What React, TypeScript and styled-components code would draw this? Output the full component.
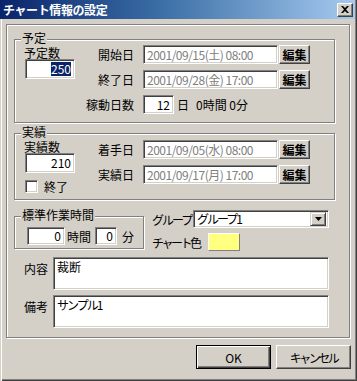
import React from 'react';
import styled, { createGlobalStyle } from 'styled-components';

// classic win2k palette
const FACE = '#d4d0c8';
const SHADOW = '#808080';
const DARK = '#404040';
const HILITE = '#ffffff';

const GlobalStyle = createGlobalStyle`
  html, body {
    margin: 0;
    padding: 0;
    background: ${FACE};
  }
  body {
    font-family: "MS UI Gothic", "Noto Sans CJK JP", sans-serif;
    font-size: 12px;
    color: #000;
  }
`;

const Window = styled.div`
  width: 357px;
  height: 381px;
  box-sizing: border-box;
  background: ${FACE};
  box-shadow: inset 1px 0 0 ${FACE}, inset 2px 0 0 ${HILITE}, inset -1px -1px 0 ${DARK},
    inset -2px -2px 0 ${SHADOW};
  display: flex;
  flex-direction: column;
  overflow: hidden;
`;

const TitleBar = styled.div`
  height: 19px;
  margin-right: 2px;
  padding: 0 2px 0 3px;
  display: flex;
  align-items: center;
  background: linear-gradient(90deg, #0a246a 0%, #3a6ea5 45%, #a6caf0 100%);
`;

const Title = styled.span`
  flex: 1;
  color: #fff;
  font-weight: bold;
  font-size: 12px;
  line-height: 19px;
  letter-spacing: -0.4px;
`;

const CloseButton = styled.div`
  width: 16px;
  height: 14px;
  box-sizing: border-box;
  background: ${FACE};
  border: 1px solid;
  border-color: ${HILITE} ${DARK} ${DARK} ${HILITE};
  box-shadow: inset -1px -1px 0 ${SHADOW};
  display: flex;
  align-items: center;
  justify-content: center;
`;

const Body = styled.div`
  padding: 5px 0 0 6px;
  display: flex;
  flex-direction: column;
`;

// the big etched frame round everything
const Frame = styled.div`
  width: 344px;
  height: 314px;
  box-sizing: border-box;
  border: 1px solid ${SHADOW};
  box-shadow: inset 1px 1px 0 ${HILITE}, 1px 1px 0 ${HILITE};
  padding: 14px 14px 0 7px;
  display: flex;
  flex-direction: column;
`;

const GroupBox = styled.div<{ $height: number; $width?: number; $top?: number; $padTop: number }>`
  position: relative;
  box-sizing: border-box;
  width: ${({ $width }) => ($width ? `${$width}px` : '100%')};
  height: ${({ $height }) => $height}px;
  margin-top: ${({ $top }) => $top ?? 0}px;
  border: 1px solid ${SHADOW};
  box-shadow: inset 1px 1px 0 ${HILITE}, 1px 1px 0 ${HILITE};
  padding-top: ${({ $padTop }) => $padTop}px;
  display: flex;
  flex-shrink: 0;
`;

const Caption = styled.span`
  position: absolute;
  top: -9px;
  left: 6px;
  padding: 0 1px;
  background: ${FACE};
  line-height: 13px;
  height: 13px;
  font-size: 12px;
`;

const LeftCol = styled.div`
  width: 71px;
  padding-left: 10px;
  box-sizing: border-box;
  display: flex;
  flex-direction: column;
  align-items: flex-start;
`;

const ColLabel = styled.div<{ $top: number }>`
  margin-top: ${({ $top }) => $top}px;
  margin-left: -1px;
  line-height: 12px;
  height: 12px;
  white-space: nowrap;
`;

const RightCol = styled.div<{ $gap: number }>`
  display: flex;
  flex-direction: column;
  gap: ${({ $gap }) => $gap}px;
`;

const Row = styled.div<{ $height: number }>`
  height: ${({ $height }) => $height}px;
  display: flex;
  align-items: center;
`;

const RowLabel = styled.span`
  width: 48px;
  margin-right: 9px;
  text-align: right;
  white-space: nowrap;
`;

const Field = styled.div<{ $w: number; $h: number; $align?: 'left' | 'right'; $muted?: boolean }>`
  width: ${({ $w }) => $w}px;
  height: ${({ $h }) => $h}px;
  box-sizing: border-box;
  flex-shrink: 0;
  background: #fff;
  border: 1px solid;
  border-color: ${SHADOW} ${HILITE} ${HILITE} ${SHADOW};
  box-shadow: inset 1px 1px 0 ${DARK}, inset -1px -1px 0 ${FACE};
  padding: 0 3px 0 3px;
  display: flex;
  align-items: center;
  justify-content: ${({ $align }) => ($align === 'right' ? 'flex-end' : 'flex-start')};
  color: ${({ $muted }) => ($muted ? '#808080' : '#000')};
  font-size: 12px;
  line-height: 12px;
  letter-spacing: ${({ $muted }) => ($muted ? '-0.5px' : '0')};
  white-space: nowrap;
  overflow: hidden;
`;

const MemoField = styled(Field)`
  align-items: flex-start;
  padding-top: 3px;
`;

// MS UI Gothic kana run narrower than Noto's
const Kana = styled.span<{ $spacing: number }>`
  letter-spacing: ${({ $spacing }) => $spacing}px;
  white-space: nowrap;
`;

const Selected = styled.span`
  background: #0a246a;
  color: #fff;
  padding: 1px 0;
`;

const EditButton = styled.button`
  width: 31px;
  height: 19px;
  margin-left: 1px;
  box-sizing: border-box;
  padding: 0;
  background: ${FACE};
  border: 1px solid;
  border-color: ${HILITE} ${DARK} ${DARK} ${HILITE};
  box-shadow: inset -1px -1px 0 ${SHADOW};
  font-family: inherit;
  font-size: 12px;
  font-weight: bold;
  color: #000;
  line-height: 12px;
`;

const Unit = styled.span<{ $left: number }>`
  margin-left: ${({ $left }) => $left}px;
  white-space: nowrap;
`;

const CheckRow = styled.div`
  margin-top: 5px;
  display: flex;
  align-items: center;
  gap: 6px;
`;

const CheckBox = styled.span`
  width: 13px;
  height: 13px;
  box-sizing: border-box;
  background: #fff;
  border: 1px solid;
  border-color: ${SHADOW} ${HILITE} ${HILITE} ${SHADOW};
  box-shadow: inset 1px 1px 0 ${DARK}, inset -1px -1px 0 ${FACE};
`;

const MiddleRow = styled.div`
  margin-top: 10px;
  height: 40px;
  display: flex;
  flex-shrink: 0;
`;

const StdInner = styled.div`
  padding: 10px 0 0 12px;
  display: flex;
  align-items: center;
  height: 18px;
`;

const SideCol = styled.div`
  margin-left: 8px;
  display: flex;
  flex-direction: column;
  gap: 5px;
`;

const SideRow = styled.div<{ $height: number }>`
  height: ${({ $height }) => $height}px;
  display: flex;
  align-items: center;
`;

const SideLabel = styled.span<{ $width: number }>`
  width: ${({ $width }) => $width}px;
  white-space: nowrap;
`;

const SelectBox = styled(Field)`
  padding-right: 2px;
  justify-content: space-between;
`;

const DropButton = styled.span`
  width: 16px;
  height: 14px;
  box-sizing: border-box;
  background: ${FACE};
  border: 1px solid;
  border-color: ${FACE} ${DARK} ${DARK} ${FACE};
  box-shadow: inset 1px 1px 0 ${HILITE}, inset -1px -1px 0 ${SHADOW};
  display: flex;
  align-items: center;
  justify-content: center;
`;

const Swatch = styled.span<{ $color: string }>`
  width: 32px;
  height: 18px;
  box-sizing: border-box;
  background: ${({ $color }) => $color};
  border: 1px solid;
  border-color: ${HILITE} ${SHADOW} ${SHADOW} ${HILITE};
`;

const MemoRow = styled.div<{ $top: number }>`
  margin-top: ${({ $top }) => $top}px;
  display: flex;
  align-items: flex-start;
  flex-shrink: 0;
`;

const MemoLabel = styled.span`
  width: 39px;
  padding: 3px 0 0 10px;
  box-sizing: border-box;
  white-space: nowrap;
`;

const Footer = styled.div`
  margin-top: 7px;
  padding-right: 6px;
  display: flex;
  justify-content: flex-end;
  gap: 5px;
`;

const DialogButton = styled.button<{ $default?: boolean }>`
  width: 75px;
  height: 24px;
  box-sizing: border-box;
  padding: 0;
  background: ${FACE};
  border: 1px solid;
  border-color: ${({ $default }) =>
    $default ? '#000' : `${HILITE} ${DARK} ${DARK} ${HILITE}`};
  box-shadow: ${({ $default }) =>
    $default
      ? `inset 1px 1px 0 ${HILITE}, inset -1px -1px 0 ${DARK}, inset -2px -2px 0 ${SHADOW}`
      : `inset -1px -1px 0 ${SHADOW}`};
  font-family: inherit;
  font-size: 12px;
  color: #000;
`;

const dates = {
  start: '2001/09/15(土) 08:00',
  end: '2001/09/28(金) 17:00',
  begun: '2001/09/05(水) 08:00',
  done: '2001/09/17(月) 17:00',
};

export default function App() {
  return (
    <>
      <GlobalStyle />
      <Window>
        <TitleBar>
          <Title>チャート情報の設定</Title>
          <CloseButton>
            <svg width="8" height="7" viewBox="0 0 8 7">
              <path d="M0 0h2l2 2 2-2h2L5 3.5 8 7H6L4 5 2 7H0l3-3.5z" fill="#000" />
            </svg>
          </CloseButton>
        </TitleBar>

        <Body>
          <Frame>
            <GroupBox $height={84} $padTop={5}>
              <Caption>予定</Caption>
              <LeftCol>
                <ColLabel $top={2}>予定数</ColLabel>
                <Field $w={50} $h={20} $align="right">
                  <Selected>250</Selected>
                </Field>
              </LeftCol>
              <RightCol $gap={6}>
                <Row $height={19}>
                  <RowLabel>開始日</RowLabel>
                  <Field $w={135} $h={19} $muted>{dates.start}</Field>
                  <EditButton>編集</EditButton>
                </Row>
                <Row $height={19}>
                  <RowLabel>終了日</RowLabel>
                  <Field $w={135} $h={19} $muted>{dates.end}</Field>
                  <EditButton>編集</EditButton>
                </Row>
                <Row $height={19}>
                  <RowLabel>稼動日数</RowLabel>
                  <Field $w={31} $h={19} $align="right">12</Field>
                  <Unit $left={3}>日</Unit>
                  <Unit $left={7}>0時間 0分</Unit>
                </Row>
              </RightCol>
            </GroupBox>

            <GroupBox $height={67} $top={10} $padTop={6}>
              <Caption>実績</Caption>
              <LeftCol>
                <ColLabel $top={1}>実績数</ColLabel>
                <Field $w={50} $h={20} $align="right">210</Field>
                <CheckRow>
                  <CheckBox />
                  <span>終了</span>
                </CheckRow>
              </LeftCol>
              <RightCol $gap={6}>
                <Row $height={19}>
                  <RowLabel>着手日</RowLabel>
                  <Field $w={135} $h={19} $muted>{dates.begun}</Field>
                  <EditButton>編集</EditButton>
                </Row>
                <Row $height={19}>
                  <RowLabel>実績日</RowLabel>
                  <Field $w={135} $h={19} $muted>{dates.done}</Field>
                  <EditButton>編集</EditButton>
                </Row>
              </RightCol>
            </GroupBox>

            <MiddleRow>
              <GroupBox $width={130} $height={33} $top={6} $padTop={0}>
                <Caption>標準作業時間</Caption>
                <StdInner>
                  <Field $w={38} $h={18} $align="right">0</Field>
                  <Unit $left={2}>時間</Unit>
                  <Field $w={22} $h={18} $align="right" style={{ marginLeft: 4 }}>0</Field>
                  <Unit $left={5}>分</Unit>
                </StdInner>
              </GroupBox>
              <SideCol>
                <SideRow $height={18}>
                  <SideLabel $width={41}>
                    <Kana $spacing={-2}>グループ</Kana>
                  </SideLabel>
                  <SelectBox $w={136} $h={18}>
                    <Kana $spacing={-2}>グループ1</Kana>
                    <DropButton>
                      <svg width="7" height="4" viewBox="0 0 7 4">
                        <path d="M0 0h7L3.5 4z" fill="#000" />
                      </svg>
                    </DropButton>
                  </SelectBox>
                </SideRow>
                <SideRow $height={18}>
                  <SideLabel $width={56}>
                    <Kana $spacing={-2.5}>チャート色</Kana>
                  </SideLabel>
                  <Swatch $color="#ffff80" />
                </SideRow>
              </SideCol>
            </MiddleRow>

            <MemoRow $top={7}>
              <MemoLabel>内容</MemoLabel>
              <MemoField $w={276} $h={33}>裁断</MemoField>
            </MemoRow>
            <MemoRow $top={5}>
              <MemoLabel>備考</MemoLabel>
              <MemoField $w={276} $h={33}>
                <Kana $spacing={-2}>サンプル1</Kana>
              </MemoField>
            </MemoRow>
          </Frame>

          <Footer>
            <DialogButton $default>OK</DialogButton>
            <DialogButton>
              <Kana $spacing={-2.5}>キャンセル</Kana>
            </DialogButton>
          </Footer>
        </Body>
      </Window>
    </>
  );
}
